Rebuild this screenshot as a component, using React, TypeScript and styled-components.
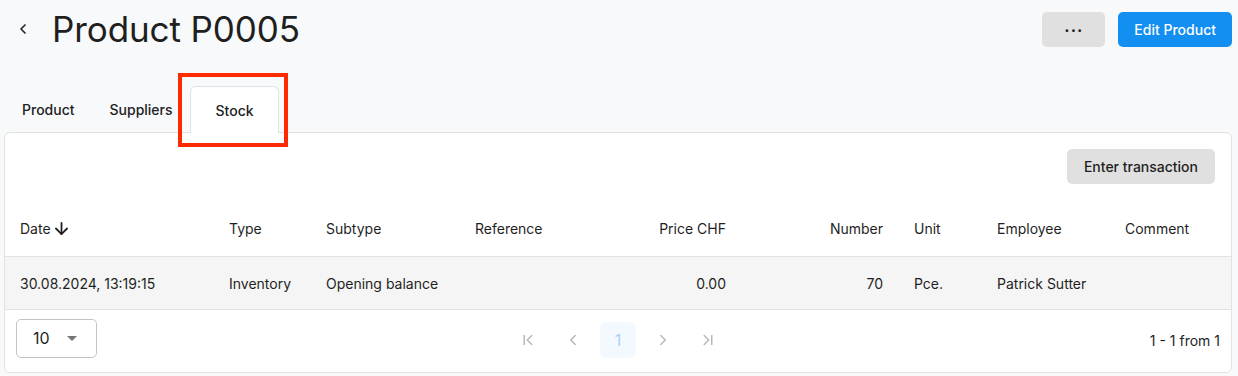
import React from "react";
import styled, { createGlobalStyle } from "styled-components";
import { ArrowDown, ChevronLeft, ChevronRight, ChevronFirst, ChevronLast } from "lucide-react";

const GlobalStyle = createGlobalStyle`
  html, body {
    margin: 0;
    padding: 0;
    background: #f8f9fa;
    font-family: Inter, "Noto Sans", sans-serif;
    color: #1f1f1f;
  }
`;

const Page = styled.div`
  width: 1238px;
  height: 376px;
  overflow: hidden;
  box-sizing: border-box;
  padding: 0 6px 0 4px;
`;

const Header = styled.div`
  display: flex;
  align-items: center;
  height: 58px;
  padding: 0 0 0 9px;
`;

const BackButton = styled.button`
  display: flex;
  align-items: center;
  justify-content: center;
  width: 20px;
  height: 20px;
  padding: 0;
  margin-right: 19px;
  border: none;
  background: transparent;
  color: #222;
  cursor: pointer;
`;

const Title = styled.h1`
  margin: 0;
  font-size: 35px;
  font-weight: 400;
  color: #1f1f1f;
  letter-spacing: -0.1px;
`;

const Actions = styled.div`
  display: flex;
  gap: 13px;
  margin-left: auto;
`;

interface ButtonProps {
  $variant?: "primary" | "secondary";
}

const Button = styled.button<ButtonProps>`
  height: 35px;
  padding: 0 16px;
  border: none;
  border-radius: 5px;
  font-family: inherit;
  font-size: 14px;
  font-weight: 500;
  background: ${(p) => (p.$variant === "primary" ? "#138ff2" : "#e0e0e0")};
  color: ${(p) => (p.$variant === "primary" ? "#fff" : "#1f1f1f")};
  cursor: pointer;
`;

const WideButton = styled(Button)`
  padding: 0 17px;
`;

const MoreButton = styled(Button)`
  width: 63px;
  font-size: 16px;
  font-weight: 700;
  letter-spacing: 1px;
  line-height: 1;
  padding-bottom: 6px;
`;

const Tabs = styled.div`
  display: flex;
  align-items: flex-end;
  height: 74px;
`;

interface TabProps {
  $active?: boolean;
}

const TabWrap = styled.div`
  position: relative;
`;

const Tab = styled.div<TabProps>`
  height: 47px;
  box-sizing: border-box;
  display: flex;
  align-items: center;
  justify-content: center;
  padding: 0 16px 0 17px;
  font-size: 14px;
  font-weight: 500;
  color: #222;
  margin-bottom: ${(p) => (p.$active ? "-1px" : "0")};
  background: ${(p) => (p.$active ? "#fff" : "transparent")};
  border: 1px solid ${(p) => (p.$active ? "#e2e2e2" : "transparent")};
  border-bottom: none;
  border-radius: 6px 6px 0 0;
  width: ${(p) => (p.$active ? "89px" : "auto")};
  position: relative;
  z-index: 1;
`;

const Highlight = styled.div`
  position: absolute;
  left: -12px;
  top: -13px;
  width: 110px;
  height: 74px;
  box-sizing: border-box;
  border: 4px solid #ff2a00;
  z-index: 2;
  pointer-events: none;
`;

const Card = styled.div`
  background: #fff;
  border: 1px solid #e2e2e2;
  border-radius: 6px;
  overflow: hidden;
`;

const Toolbar = styled.div`
  display: flex;
  justify-content: flex-end;
  padding: 16px 16px 0 16px;
  height: 35px;
`;

const Table = styled.table`
  width: 100%;
  border-collapse: collapse;
  table-layout: fixed;
  font-size: 14px;
  margin-top: 16px;
`;

interface CellProps {
  $align?: "left" | "right";
}

const Th = styled.th<CellProps>`
  height: 56px;
  padding: 0 16px 0 15px;
  text-align: ${(p) => p.$align || "left"};
  font-weight: 400;
  color: #1f1f1f;
  border-bottom: 1px solid #e2e2e2;
  white-space: nowrap;
`;

const SortLabel = styled.span`
  display: inline-flex;
  align-items: center;
  gap: 1px;
`;

const Row = styled.tr`
  background: #f5f5f5;
`;

const Td = styled.td<CellProps>`
  height: 52px;
  padding: 0 16px 0 15px;
  text-align: ${(p) => p.$align || "left"};
  color: #1f1f1f;
  border-bottom: 1px solid #e2e2e2;
  white-space: nowrap;
`;

const Footer = styled.div`
  display: grid;
  grid-template-columns: 1fr auto 1fr;
  align-items: center;
  padding: 8px 11px 14px 11px;
`;

const Select = styled.div`
  display: flex;
  align-items: center;
  width: 81px;
  height: 39px;
  box-sizing: border-box;
  padding: 0 16px;
  border: 1px solid #c4c4c4;
  border-radius: 5px;
  font-size: 16px;
  color: #1f1f1f;
`;

const Caret = styled.span`
  margin-left: auto;
  margin-right: 3px;
  width: 0;
  height: 0;
  border-left: 5px solid transparent;
  border-right: 5px solid transparent;
  border-top: 5px solid #757575;
`;

const Pager = styled.div`
  display: flex;
  align-items: center;
  gap: 9px;
  margin-top: 4px;
`;

interface PageButtonProps {
  $current?: boolean;
}

const PageButton = styled.div<PageButtonProps>`
  width: 36px;
  height: 36px;
  display: flex;
  align-items: center;
  justify-content: center;
  border-radius: 6px;
  font-size: 16px;
  color: ${(p) => (p.$current ? "#a9d3f7" : "#b8b8b8")};
  background: ${(p) => (p.$current ? "#f3f9ff" : "transparent")};
`;

const Range = styled.div`
  justify-self: end;
  font-size: 14px;
  color: #1f1f1f;
  margin-top: 4px;
`;

const columns = [
  { label: "Date", width: 209 },
  { label: "Type", width: 97 },
  { label: "Subtype", width: 149 },
  { label: "Reference", width: 141 },
  { label: "Price CHF", width: 141, align: "right" as const },
  { label: "Number", width: 157, align: "right" as const },
  { label: "Unit", width: 83 },
  { label: "Employee", width: 128 },
  { label: "Comment", width: 122 },
];

const rows = [
  ["30.08.2024, 13:19:15", "Inventory", "Opening balance", "", "0.00", "70", "Pce.", "Patrick Sutter", ""],
];

export default function App() {
  return (
    <Page>
      <GlobalStyle />
      <Header>
        <BackButton>
          <ChevronLeft size={16} strokeWidth={2.5} />
        </BackButton>
        <Title>Product P0005</Title>
        <Actions>
          <MoreButton>...</MoreButton>
          <Button $variant="primary">Edit Product</Button>
        </Actions>
      </Header>
      <Tabs>
        <Tab>Product</Tab>
        <Tab>Suppliers</Tab>
        <TabWrap>
          <Tab $active>Stock</Tab>
          <Highlight />
        </TabWrap>
      </Tabs>
      <Card>
        <Toolbar>
          <WideButton>Enter transaction</WideButton>
        </Toolbar>
        <Table>
          <colgroup>
            {columns.map((c) => (
              <col key={c.label} style={{ width: c.width }} />
            ))}
          </colgroup>
          <thead>
            <tr>
              {columns.map((c, i) => (
                <Th key={c.label} $align={c.align}>
                  {i === 0 ? (
                    <SortLabel>
                      {c.label}
                      <ArrowDown size={19} strokeWidth={2.25} />
                    </SortLabel>
                  ) : (
                    c.label
                  )}
                </Th>
              ))}
            </tr>
          </thead>
          <tbody>
            {rows.map((r, ri) => (
              <Row key={ri}>
                {r.map((v, i) => (
                  <Td key={i} $align={columns[i].align}>
                    {v}
                  </Td>
                ))}
              </Row>
            ))}
          </tbody>
        </Table>
        <Footer>
          <Select>
            10
            <Caret />
          </Select>
          <Pager>
            <PageButton>
              <ChevronFirst size={18} strokeWidth={2} />
            </PageButton>
            <PageButton>
              <ChevronLeft size={18} strokeWidth={2} />
            </PageButton>
            <PageButton $current>1</PageButton>
            <PageButton>
              <ChevronRight size={18} strokeWidth={2} />
            </PageButton>
            <PageButton>
              <ChevronLast size={18} strokeWidth={2} />
            </PageButton>
          </Pager>
          <Range>1 - 1 from 1</Range>
        </Footer>
      </Card>
    </Page>
  );
}
